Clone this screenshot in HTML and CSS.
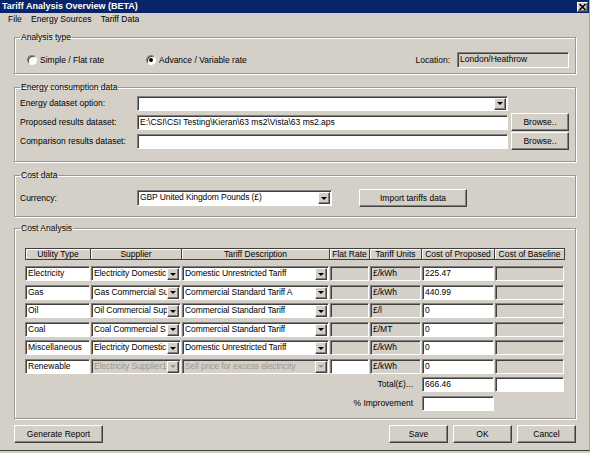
FILE: index.html
```html
<!DOCTYPE html>
<html lang="en">
<head>
    <meta charset="UTF-8">
    <meta name="viewport" content="width=device-width, initial-scale=1.0">
    <title>Tariff Analysis Overview (BETA)</title>
    <link rel="stylesheet" href="styles.css">
</head>
<body>
    <div class="window">

        <div class="titlebar">
            <span class="title">Tariff Analysis Overview (BETA)</span>
            <span class="close raised">
                <svg width="9" height="8" viewBox="0 0 9 8"><path d="M1.5 1 L7.5 7 M7.5 1 L1.5 7" stroke="#000" stroke-width="1.6"/></svg>
            </span>
        </div>

        <div class="menubar">
            <span>File</span>
            <span>Energy Sources</span>
            <span>Tariff Data</span>
        </div>

        <div class="client">

            <fieldset class="group analysis">
                <legend>Analysis type</legend>
                <div class="line">
                    <label class="radio-opt first"><span class="radio"></span>Simple / Flat rate</label>
                    <label class="radio-opt"><span class="radio checked"></span>Advance / Variable rate</label>
                    <span class="location-label">Location:</span>
                    <div class="tb ro location">London/Heathrow</div>
                </div>
            </fieldset>

            <fieldset class="group energy">
                <legend>Energy consumption data</legend>
                <div class="form-grid">
                    <span class="lbl">Energy dataset option:</span>
                    <div class="tb combo field"><span class="val"></span><span class="arrow raised"></span></div>
                    <span></span>

                    <span class="lbl">Proposed results dataset:</span>
                    <div class="tb field">E:\CSI\CSI Testing\Kieran\63 ms2\Vista\63 ms2.aps</div>
                    <span class="btn raised">Browse..</span>

                    <span class="lbl">Comparison results dataset:</span>
                    <div class="tb field"></div>
                    <span class="btn raised">Browse..</span>
                </div>
            </fieldset>

            <fieldset class="group cost">
                <legend>Cost data</legend>
                <div class="line">
                    <span class="lbl">Currency:</span>
                    <div class="tb combo currency"><span class="val">GBP United Kingdom Pounds (£)</span><span class="arrow raised"></span></div>
                    <span class="btn raised import">Import tariffs data</span>
                </div>
            </fieldset>

            <fieldset class="group analysis-table">
                <legend>Cost Analysis</legend>
                <div class="thead">
                    <span>Utility Type</span>
                    <span>Supplier</span>
                    <span>Tariff Description</span>
                    <span>Flat Rate</span>
                    <span>Tariff Units</span>
                    <span>Cost of Proposed</span>
                    <span>Cost of Baseline</span>
                </div>
                <div class="tbody">
                    <div class="tb">Electricity</div>
                    <div class="tb combo"><span class="val">Electricity Domestic</span><span class="arrow raised"></span></div>
                    <div class="tb combo"><span class="val">Domestic Unrestricted Tariff</span><span class="arrow raised"></span></div>
                    <div class="tb ro"></div>
                    <div class="tb ro">£/kWh</div>
                    <div class="tb">225.47</div>
                    <div class="tb ro"></div>

                    <div class="tb">Gas</div>
                    <div class="tb combo"><span class="val">Gas Commercial Su</span><span class="arrow raised"></span></div>
                    <div class="tb combo"><span class="val">Commercial Standard Tariff A</span><span class="arrow raised"></span></div>
                    <div class="tb ro"></div>
                    <div class="tb ro">£/kWh</div>
                    <div class="tb">440.99</div>
                    <div class="tb ro"></div>

                    <div class="tb">Oil</div>
                    <div class="tb combo"><span class="val">Oil Commercial Sup</span><span class="arrow raised"></span></div>
                    <div class="tb combo"><span class="val">Commercial Standard Tariff</span><span class="arrow raised"></span></div>
                    <div class="tb ro"></div>
                    <div class="tb ro">£/l</div>
                    <div class="tb">0</div>
                    <div class="tb ro"></div>

                    <div class="tb">Coal</div>
                    <div class="tb combo"><span class="val">Coal Commercial S</span><span class="arrow raised"></span></div>
                    <div class="tb combo"><span class="val">Commercial Standard Tariff</span><span class="arrow raised"></span></div>
                    <div class="tb ro"></div>
                    <div class="tb ro">£/MT</div>
                    <div class="tb">0</div>
                    <div class="tb ro"></div>

                    <div class="tb">Miscellaneous</div>
                    <div class="tb combo"><span class="val">Electricity Domestic</span><span class="arrow raised"></span></div>
                    <div class="tb combo"><span class="val">Domestic Unrestricted Tariff</span><span class="arrow raised"></span></div>
                    <div class="tb ro"></div>
                    <div class="tb ro">£/kWh</div>
                    <div class="tb">0</div>
                    <div class="tb ro"></div>

                    <div class="tb">Renewable</div>
                    <div class="tb combo disabled"><span class="val">Electricity Supplier1</span><span class="arrow raised"></span></div>
                    <div class="tb combo disabled"><span class="val">Sell price for excess electricity</span><span class="arrow raised"></span></div>
                    <div class="tb"></div>
                    <div class="tb ro">£/kWh</div>
                    <div class="tb">0</div>
                    <div class="tb ro"></div>

                    <span class="sum-label">Total(£)...</span>
                    <div class="tb">666.46</div>
                    <div class="tb"></div>

                    <span class="sum-label">% Improvement</span>
                    <div class="tb"></div>
                </div>
            </fieldset>

            <div class="actions">
                <span class="btn raised report">Generate Report</span>
                <span class="spacer"></span>
                <span class="btn raised">Save</span>
                <span class="btn raised">OK</span>
                <span class="btn raised">Cancel</span>
            </div>

        </div>
    </div>
</body>
</html>
```

FILE: styles.css
```css
body {
    margin: 0;
    background: #d4d0c8;
    font-family: "Liberation Sans", Arial, sans-serif;
    font-size: 8.5px;
    color: #000;
}

/* Window frame */
.window {
    width: 590px;
    height: 451px;
    box-sizing: border-box;
    background: #d4d0c8;
    border-bottom: 1px solid #404040;
    border-right: 1px solid #a8a49c;
    overflow: hidden;
}
.titlebar {
    height: 13px;
    background: #0a246a;
    display: flex;
    align-items: center;
    justify-content: space-between;
    padding: 0 1px 0 2px;
}
.titlebar .title {
    color: #fff;
    font-weight: bold;
    font-size: 9px;
    line-height: 13px;
}
.titlebar .close {
    width: 11px;
    height: 10px;
    display: flex;
    align-items: center;
    justify-content: center;
}
.menubar {
    height: 13px;
    display: flex;
    padding-left: 3.5px;
    line-height: 13px;
}
.menubar span {
    padding: 0 4.6px;
}
.client {
    padding: 0 13px 0 14px;
}

/* 3D bits */
.raised {
    box-sizing: border-box;
    background: #d4d0c8;
    border: 1px solid;
    border-color: #fff #404040 #404040 #fff;
    box-shadow: inset -1px -1px 0 #808080;
}
.btn {
    display: flex;
    align-items: center;
    justify-content: center;
    height: 18px;
    width: 58px;
}
.tb {
    box-sizing: border-box;
    height: 15px;
    background: #fff;
    border: 1px solid;
    border-color: #808080 #fff #fff #808080;
    box-shadow: inset 1px 1px 0 #404040;
    padding: 0 2px;
    line-height: 13px;
    white-space: nowrap;
    overflow: hidden;
}
.tb.ro {
    background: #d4d0c8;
}
.combo {
    display: flex;
    padding-right: 1px;
}
.combo .val {
    flex: 1;
    overflow: hidden;
    letter-spacing: -0.1px;
}
.combo .arrow {
    width: 12px;
    height: 12px;
    margin-top: 1px;
    display: flex;
    align-items: center;
    justify-content: center;
}
.combo .arrow::after {
    content: "";
    border-left: 3px solid transparent;
    border-right: 3px solid transparent;
    border-top: 3px solid #000;
}
.combo.disabled {
    background: #d4d0c8;
    color: #9a978f;
}
.combo.disabled .arrow::after {
    border-top-color: #9a978f;
}

/* Group boxes */
.group {
    margin: 0;
    padding: 0 6px 0 5px;
    border: 1px solid #9c9890;
    box-shadow: inset 1px 1px 0 #fff, 1px 1px 0 #fff;
    min-width: 0;
}
.group legend {
    padding: 0 1px;
    line-height: 10px;
}
.line {
    display: flex;
    align-items: center;
}

/* Analysis type */
.analysis {
    margin-top: 6px;
    padding-top: 10px;
    padding-bottom: 5px;
}
.analysis .line {
    height: 16px;
    padding-left: 7px;
}
.radio-opt {
    display: flex;
    align-items: center;
}
.radio-opt.first {
    width: 119px;
}
.radio {
    box-sizing: border-box;
    width: 10px;
    height: 10px;
    margin-right: 3px;
    border-radius: 50%;
    background: #fff;
    border: 1px solid;
    border-color: #808080 #fff #fff #808080;
    box-shadow: inset 1px 1px 0 #404040;
    position: relative;
}
.radio.checked::after {
    content: "";
    position: absolute;
    left: 2px;
    top: 2px;
    width: 4px;
    height: 4px;
    border-radius: 50%;
    background: #000;
}
.location-label {
    margin-left: auto;
    margin-right: 7px;
}
.location {
    width: 112px;
    height: 16px;
}

/* Energy consumption data */
.energy {
    margin-top: 8px;
    padding-top: 2px;
    padding-bottom: 11px;
}
.form-grid {
    display: grid;
    grid-template-columns: 117px 374px 58px;
    grid-auto-rows: 18px;
    row-gap: 1px;
    align-items: center;
}
.form-grid .field {
    margin-right: 3px;
}

/* Cost data */
.cost {
    margin-top: 8px;
    padding-top: 9px;
    padding-bottom: 9px;
}
.cost .line {
    height: 18px;
}
.cost .lbl {
    width: 117px;
}
.currency {
    width: 195px;
    height: 16px;
}
.import {
    width: 108px;
    margin-left: 27px;
}

/* Cost analysis table */
.analysis-table {
    margin-top: 6px;
    padding-top: 15px;
    padding-bottom: 7px;
}
.thead,
.tbody {
    display: grid;
    grid-template-columns: 66px 91px 148px 40px 52px 73px 70px;
    margin-left: 5px;
}
.thead {
    height: 12px;
    margin-bottom: 6px;
}
.thead span {
    border: 1px solid #404040;
    border-left: 0;
    box-shadow: inset 1px 1px 0 #fff;
    text-align: center;
    line-height: 10px;
    white-space: nowrap;
    overflow: hidden;
}
.thead span:first-child {
    border-left: 1px solid #404040;
}
.tbody {
    grid-auto-rows: 15px;
    row-gap: 3.5px;
}
.tbody .tb {
    margin-right: 1px;
}
.sum-label {
    grid-column: 1 / 6;
    text-align: right;
    padding-right: 9px;
    line-height: 15px;
}

/* Bottom buttons */
.actions {
    display: flex;
    gap: 5px;
    margin-top: 6px;
}
.actions .spacer {
    flex: 1;
}
.actions .btn {
    width: 59px;
}
.actions .report {
    width: 89px;
}
```
